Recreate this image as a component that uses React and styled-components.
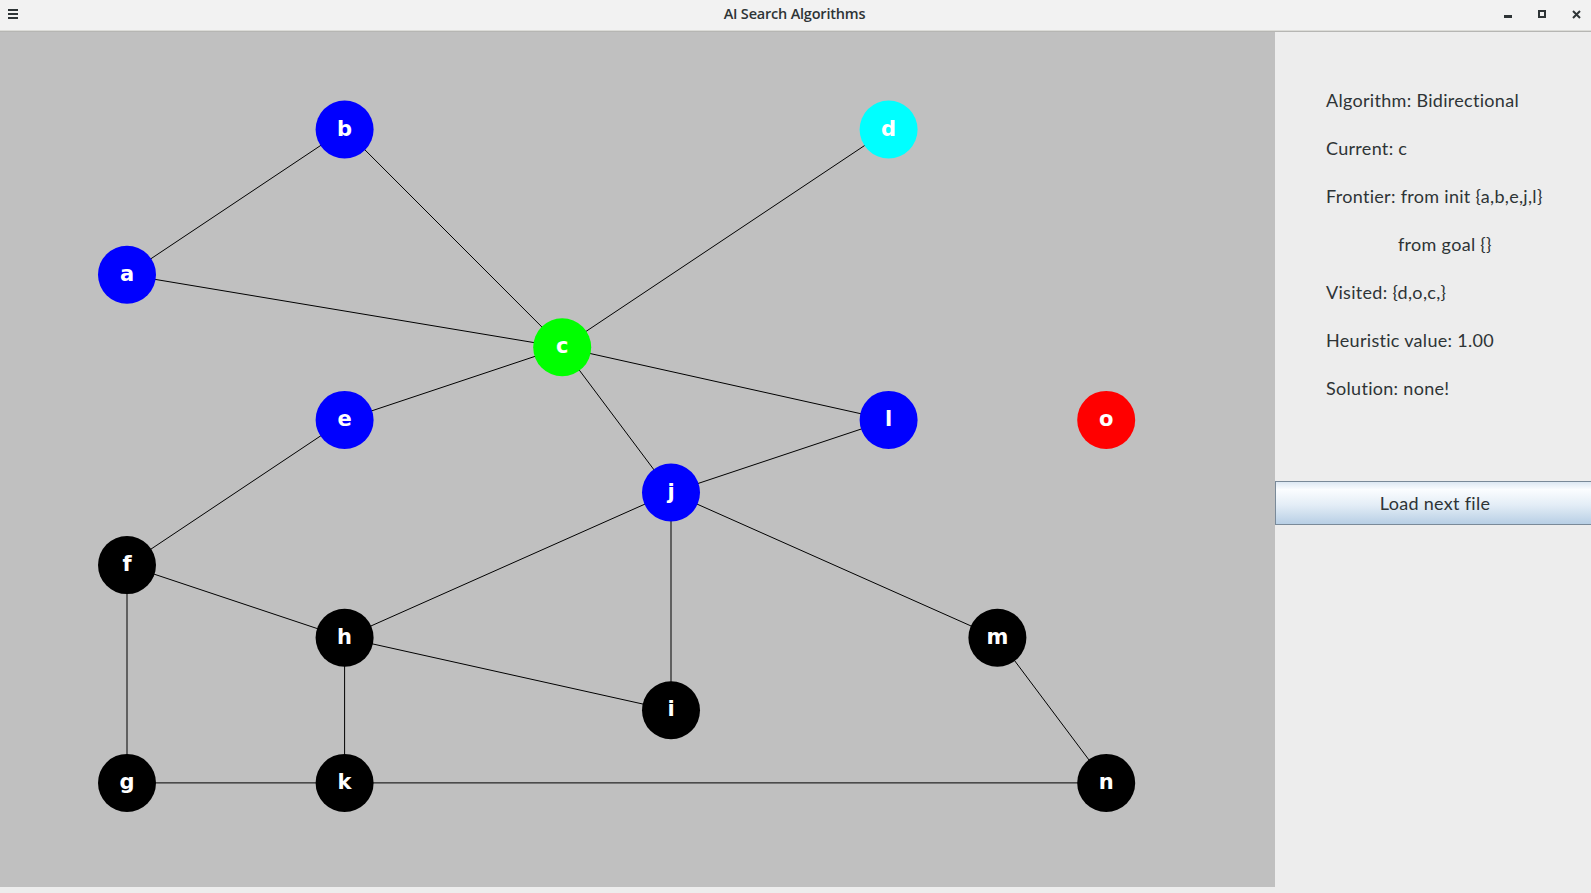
import React from "react";
import styled, { createGlobalStyle } from "styled-components";

const GlobalStyle = createGlobalStyle`
  html, body {
    margin: 0;
    padding: 0;
    overflow: hidden;
    background: #ededed;
  }
`;

// graph layout: columns / rows on a loose grid
const colX = (c) => 127 + 108.8 * c;
const rowY = (r) => 97.5 + 72.6 * r;

const NODES = {
  a: { c: 0, r: 2, fill: "#0000ff" },
  b: { c: 2, r: 0, fill: "#0000ff" },
  c: { c: 4, r: 3, fill: "#00ff00" },
  d: { c: 7, r: 0, fill: "#00ffff" },
  e: { c: 2, r: 4, fill: "#0000ff" },
  f: { c: 0, r: 6, fill: "#000000" },
  g: { c: 0, r: 9, fill: "#000000" },
  h: { c: 2, r: 7, fill: "#000000" },
  i: { c: 5, r: 8, fill: "#000000" },
  j: { c: 5, r: 5, fill: "#0000ff" },
  k: { c: 2, r: 9, fill: "#000000" },
  l: { c: 7, r: 4, fill: "#0000ff" },
  m: { c: 8, r: 7, fill: "#000000" },
  n: { c: 9, r: 9, fill: "#000000" },
  o: { c: 9, r: 4, fill: "#ff0000" },
};

const EDGES = [
  ["a", "b"], ["a", "c"], ["b", "c"], ["c", "d"], ["c", "e"], ["c", "l"],
  ["c", "j"], ["j", "l"], ["e", "f"], ["f", "h"], ["f", "g"], ["j", "h"],
  ["j", "i"], ["j", "m"], ["h", "i"], ["h", "k"], ["g", "k"], ["k", "n"],
  ["m", "n"],
];

const Window = styled.div`
  display: flex;
  flex-direction: column;
  width: 1591px;
  height: 893px;
  background: #ededed;
`;

const TitleBar = styled.div`
  height: 31px;
  flex-shrink: 0;
  display: grid;
  grid-template-columns: 1fr auto 1fr;
  align-items: center;
  background: #f2f2f2;
  border-bottom: 1px solid #b6b6b3;
  box-shadow: inset 0 -1px 0 #dcdcd8;
  color: #2e3436;
`;

const Title = styled.div`
  font-family: "Open Sans", "DejaVu Sans", sans-serif;
  font-weight: 600;
  font-size: 14.5px;
  letter-spacing: -0.2px;
  margin-top: -4px;
  margin-left: -2px;
`;

const MenuButton = styled.div`
  width: 10px;
  margin-left: 8px;
  display: flex;
  flex-direction: column;
  gap: 2px;
  margin-top: -4px;
  span {
    display: block;
    height: 2px;
    background: #2e3436;
  }
`;

const Controls = styled.div`
  justify-self: end;
  display: flex;
  align-items: center;
  gap: 26px;
  margin-right: 10px;
  margin-top: -3px;
`;

const Main = styled.div`
  flex: 1;
  display: flex;
  align-items: flex-start;
`;

const Canvas = styled.div`
  width: 1275px;
  height: 855px;
  background: #c0c0c0;
`;

const Side = styled.div`
  flex: 1;
  display: flex;
  flex-direction: column;
  padding-top: 44px;
`;

const InfoLine = styled.div`
  height: 48px;
  line-height: 48px;
  padding-left: ${(p) => (p.indent ? 123 : 51)}px;
  font-family: "Lato", "Noto Sans", sans-serif;
  font-size: 18px;
  letter-spacing: 0.3px;
  color: #2e3436;
  white-space: nowrap;
`;

const LoadButton = styled.button`
  margin-top: 69px;
  height: 44px;
  width: 100%;
  border: 1px solid #7a8a99;
  border-right: none;
  background: linear-gradient(#dde8f3 0%, #fbfdff 18%, #e3edf6 55%, #b8cfe5 100%);
  font-family: "Lato", "Noto Sans", sans-serif;
  font-size: 18px;
  letter-spacing: 0.3px;
  color: #2e3436;
  padding: 0 0 0 3px;
`;

const Graph = () => (
  <svg width="1275" height="855" viewBox="0 0 1275 855">
    {EDGES.map(([u, v]) => (
      <line
        key={u + v}
        x1={colX(NODES[u].c)}
        y1={rowY(NODES[u].r)}
        x2={colX(NODES[v].c)}
        y2={rowY(NODES[v].r)}
        stroke="#000"
        strokeWidth="1"
      />
    ))}
    {Object.entries(NODES).map(([name, n]) => (
      <g key={name}>
        <circle cx={colX(n.c)} cy={rowY(n.r)} r="29" fill={n.fill} />
        <text
          x={colX(n.c)}
          y={rowY(n.r) + 6}
          textAnchor="middle"
          fill="#fff"
          fontFamily="'DejaVu Sans', sans-serif"
          fontWeight="bold"
          fontSize="21"
        >
          {name}
        </text>
      </g>
    ))}
  </svg>
);

export default function App() {
  return (
    <Window>
      <GlobalStyle />
      <TitleBar>
        <MenuButton>
          <span />
          <span />
          <span />
        </MenuButton>
        <Title>AI Search Algorithms</Title>
        <Controls>
          <svg width="8" height="8" viewBox="0 0 8 8">
            <rect x="0" y="5" width="8" height="3" fill="#2e3436" />
          </svg>
          <svg width="8" height="8" viewBox="0 0 8 8">
            <rect x="1" y="1" width="6" height="6" fill="none" stroke="#2e3436" strokeWidth="2" />
          </svg>
          <svg width="9" height="9" viewBox="0 0 9 9">
            <path d="M1 1 L8 8 M8 1 L1 8" stroke="#2e3436" strokeWidth="2" />
          </svg>
        </Controls>
      </TitleBar>
      <Main>
        <Canvas>
          <Graph />
        </Canvas>
        <Side>
          <InfoLine>Algorithm: Bidirectional</InfoLine>
          <InfoLine>Current: c</InfoLine>
          <InfoLine>Frontier: from init {"{a,b,e,j,l}"}</InfoLine>
          <InfoLine indent>from goal {"{}"}</InfoLine>
          <InfoLine>Visited: {"{d,o,c,}"}</InfoLine>
          <InfoLine>Heuristic value: 1.00</InfoLine>
          <InfoLine>Solution: none!</InfoLine>
          <LoadButton>Load next file</LoadButton>
        </Side>
      </Main>
    </Window>
  );
}
